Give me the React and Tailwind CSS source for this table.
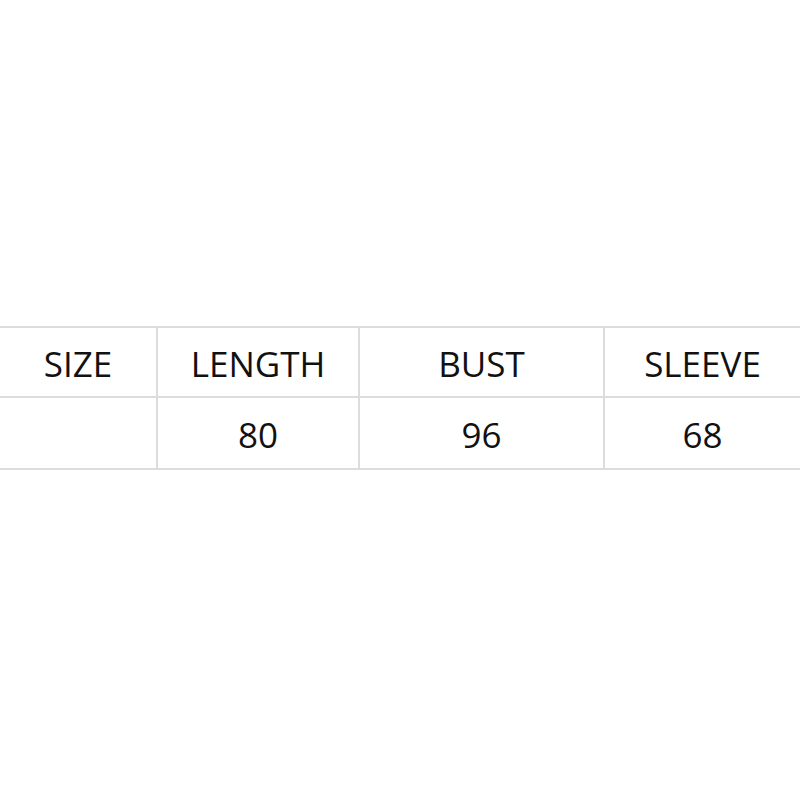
import React from 'react'

const heads = ['SIZE', 'LENGTH', 'BUST', 'SLEEVE']
const vals = ['', '80', '96', '68']

const Row = ({ cells, top }) => {
  return (
    <div className={`grid grid-cols-[156px_202px_245px_197px] h-[72px] border-[#dcdcdc] ${top ? 'border-y-2' : 'border-b-2'}`}>
      {cells.map((c, i) => (
        <div key={i} className={`flex items-center justify-center pt-[4px] ${i > 0 ? 'border-l-2 border-[#dcdcdc]' : ''}`}>
          {c}
        </div>
      ))}
    </div>
  )
}

const App = () => {
  return (
    <section className="w-[800px] h-[800px] bg-white pt-[326px] text-[35px] text-[#111] font-['Open_Sans',sans-serif]">
      <Row cells={heads} top />
      <Row cells={vals} />
    </section>
  )
}

export default App
